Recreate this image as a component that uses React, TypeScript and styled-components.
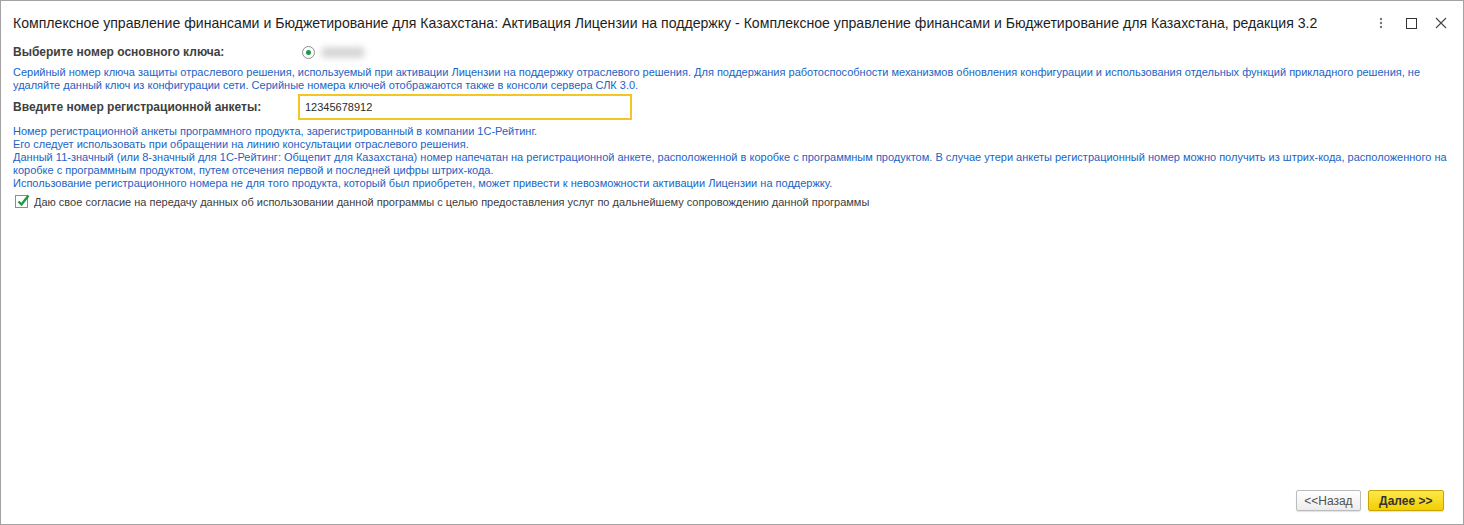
import React from 'react';
import styled, { createGlobalStyle } from 'styled-components';

const GlobalStyle = createGlobalStyle`
	html, body, #root {
		height: 100%;
	}
	body {
		margin: 0;
		background: #fff;
		font-family: 'Liberation Sans', Arial, sans-serif;
	}
	* {
		box-sizing: border-box;
	}
`;

const Window = styled.div`
	display: flex;
	flex-direction: column;
	height: 100%;
	border: 1px solid #a3a3a3;
	background: #fff;
`;

const TitleBar = styled.div`
	display: flex;
	align-items: center;
	height: 44px;
	padding: 0 12px 0 12px;
`;

const Title = styled.div`
	flex: 1;
	font-size: 14.1px;
	color: #1e1e1e;
	white-space: nowrap;
	overflow: hidden;
`;

const WindowControls = styled.div`
	display: flex;
	align-items: center;
	gap: 10px;
`;

const ControlButton = styled.div`
	width: 20px;
	height: 20px;
	display: flex;
	align-items: center;
	justify-content: center;
`;

const Content = styled.div`
	flex: 1;
	padding: 0 14px 0 12px;
`;

const FieldRow = styled.div<{ $height?: number; $top?: number }>`
	display: flex;
	align-items: center;
	height: ${(p) => p.$height ?? 18}px;
	margin-top: ${(p) => p.$top ?? 0}px;
`;

const Label = styled.div`
	width: 285px;
	font-size: 12px;
	font-weight: bold;
	color: #404040;
`;

const RadioItem = styled.div`
	display: flex;
	align-items: center;
	gap: 6px;
	margin-left: 4px;
`;

const RadioCircle = styled.span`
	width: 13px;
	height: 13px;
	border-radius: 50%;
	border: 1px solid #8c8c8c;
	background: #fff;
	display: flex;
	align-items: center;
	justify-content: center;
	&::after {
		content: '';
		width: 5px;
		height: 5px;
		border-radius: 50%;
		background: #1a9a4b;
	}
`;

const HiddenKey = styled.span`
	width: 44px;
	height: 11px;
	border-radius: 5px;
	background: #d6d6d6;
	filter: blur(3px);
`;

const Hint = styled.div<{ $top: number }>`
	margin-top: ${(p) => p.$top}px;
	font-size: 11px;
	line-height: 13px;
	color: #2163c5;
`;

const Input = styled.div`
	width: 334px;
	height: 26px;
	border: 2px solid #f3c623;
	padding: 0 5px;
	display: flex;
	align-items: center;
	font-size: 11px;
	color: #2b2b2b;
`;

const CheckRow = styled.label`
	display: flex;
	align-items: center;
	gap: 6px;
	margin-top: 5px;
	margin-left: 2px;
	font-size: 11px;
	color: #3c3c3c;
`;

const CheckBox = styled.span`
	width: 13px;
	height: 13px;
	border: 1px solid #8c8c8c;
	background: #fff;
	position: relative;
	svg {
		position: absolute;
		left: 0;
		top: -2px;
	}
`;

const Footer = styled.div`
	display: flex;
	justify-content: flex-end;
	gap: 7px;
	padding: 0 19px 13px 0;
`;

const Button = styled.button<{ $primary?: boolean }>`
	height: 21px;
	padding: 0 ${(p) => (p.$primary ? 10.5 : 7)}px;
	border-radius: 2px;
	font-family: 'Liberation Sans', Arial, sans-serif;
	font-size: 12px;
	font-weight: ${(p) => (p.$primary ? 'bold' : 'normal')};
	color: ${(p) => (p.$primary ? '#333' : '#505050')};
	border: 1px solid ${(p) => (p.$primary ? '#c9a500' : '#bcbcbc')};
	background: ${(p) =>
		p.$primary ? 'linear-gradient(#fde84c, #f2cf00)' : 'linear-gradient(#ffffff, #ececec)'};
	box-shadow: 0 1px 1px rgba(0, 0, 0, 0.12);
`;

export default function App() {
	return (
		<>
			<GlobalStyle />
			<Window>
				<TitleBar>
					<Title>
						Комплексное управление финансами и Бюджетирование для Казахстана: Активация Лицензии на
						поддержку - Комплексное управление финансами и Бюджетирование для Казахстана, редакция 3.2
					</Title>
					<WindowControls>
						<ControlButton>
							<svg width="4" height="12" viewBox="0 0 4 12">
								<circle cx="2" cy="2" r="1.2" fill="#777" />
								<circle cx="2" cy="6" r="1.2" fill="#777" />
								<circle cx="2" cy="10" r="1.2" fill="#777" />
							</svg>
						</ControlButton>
						<ControlButton>
							<svg width="11" height="11" viewBox="0 0 11 11">
								<rect x="0.5" y="0.5" width="10" height="10" fill="none" stroke="#333" />
							</svg>
						</ControlButton>
						<ControlButton>
							<svg width="12" height="12" viewBox="0 0 12 12">
								<path d="M1 1 L11 11 M11 1 L1 11" stroke="#444" strokeWidth="1.1" />
							</svg>
						</ControlButton>
					</WindowControls>
				</TitleBar>
				<Content>
					<FieldRow $height={14}>
						<Label>Выберите номер основного ключа:</Label>
						<RadioItem>
							<RadioCircle />
							<HiddenKey />
						</RadioItem>
					</FieldRow>
					<Hint $top={7}>
						Серийный номер ключа защиты отраслевого решения, используемый при активации Лицензии на
						поддержку отраслевого решения. Для поддержания работоспособности механизмов обновления
						конфигурации и использования отдельных функций прикладного решения, не удаляйте данный ключ
						из конфигурации сети. Серийные номера ключей отображаются также в консоли сервера СЛК 3.0.
					</Hint>
					<FieldRow $height={26} $top={2}>
						<Label>Введите номер регистрационной анкеты:</Label>
						<Input>12345678912</Input>
					</FieldRow>
					<Hint $top={5}>
						Номер регистрационной анкеты программного продукта, зарегистрированный в компании 1С-Рейтинг.
						<br />
						Его следует использовать при обращении на линию консультации отраслевого решения.
						<br />
						Данный 11-значный (или 8-значный для 1С-Рейтинг: Общепит для Казахстана) номер напечатан на
						регистрационной анкете, расположенной в коробке с программным продуктом. В случае утери
						анкеты регистрационный номер можно получить из штрих-кода, расположенного на коробке с
						программным продуктом, путем отсечения первой и последней цифры штрих-кода.
						<br />
						Использование регистрационного номера не для того продукта, который был приобретен, может
						привести к невозможности активации Лицензии на поддержку.
					</Hint>
					<CheckRow>
						<CheckBox>
							<svg width="14" height="14" viewBox="0 0 14 14">
								<path d="M2.5 7.5 L5.5 10.5 L12.5 1.5" fill="none" stroke="#1f9a3f" strokeWidth="2.4" />
							</svg>
						</CheckBox>
						Даю свое согласие на передачу данных об использовании данной программы с целью предоставления
						услуг по дальнейшему сопровождению данной программы
					</CheckRow>
				</Content>
				<Footer>
					<Button>&lt;&lt;Назад</Button>
					<Button $primary>Далее &gt;&gt;</Button>
				</Footer>
			</Window>
		</>
	);
}
